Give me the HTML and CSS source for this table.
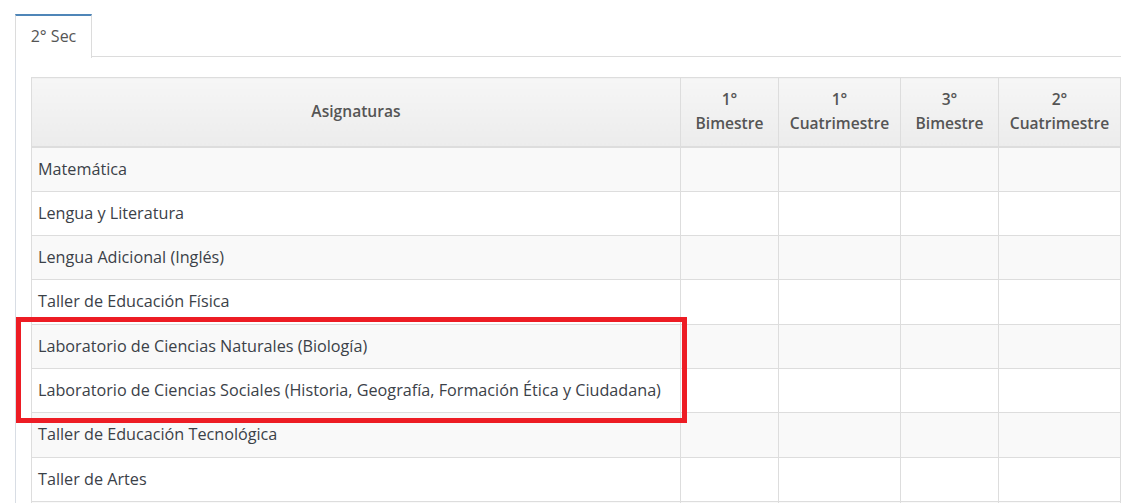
FILE: index.html
```html
<!DOCTYPE html>
<html lang="es">
<head>
<meta charset="utf-8">
<title>Asignaturas</title>
<link rel="stylesheet" href="styles.css">
</head>
<body>
<div class="page">
  <ul class="tabs">
    <li class="tab active">2° Sec</li>
  </ul>
  <div class="panel">
    <div class="table-wrap">
      <table class="grades">
        <colgroup>
          <col class="c-subject">
          <col class="c-bim">
          <col class="c-cuat">
          <col class="c-bim">
          <col class="c-cuat">
        </colgroup>
        <thead>
          <tr>
            <th>Asignaturas</th>
            <th>1°<br>Bimestre</th>
            <th>1°<br>Cuatrimestre</th>
            <th>3°<br>Bimestre</th>
            <th>2°<br>Cuatrimestre</th>
          </tr>
        </thead>
        <tbody>
          <tr><td>Matemática</td><td></td><td></td><td></td><td></td></tr>
          <tr><td>Lengua y Literatura</td><td></td><td></td><td></td><td></td></tr>
          <tr><td>Lengua Adicional (Inglés)</td><td></td><td></td><td></td><td></td></tr>
          <tr><td>Taller de Educación Física</td><td></td><td></td><td></td><td></td></tr>
          <tr><td>Laboratorio de Ciencias Naturales (Biología)</td><td></td><td></td><td></td><td></td></tr>
          <tr><td>Laboratorio de Ciencias Sociales (Historia, Geografía, Formación Ética y Ciudadana)</td><td></td><td></td><td></td><td></td></tr>
          <tr><td>Taller de Educación Tecnológica</td><td></td><td></td><td></td><td></td></tr>
          <tr><td>Taller de Artes</td><td></td><td></td><td></td><td></td></tr>
          <tr><td>&nbsp;</td><td></td><td></td><td></td><td></td></tr>
        </tbody>
      </table>
      <div class="highlight"></div>
    </div>
  </div>
</div>
</body>
</html>
```

FILE: styles.css
```css
html, body {
  margin: 0;
  padding: 0;
  background: #fff;
  overflow: hidden;
}

.page {
  padding-top: 14px;
  font-family: "Open Sans", "Liberation Sans", sans-serif;
  font-size: 16px;
  color: #3b4148;
}

.tabs {
  list-style: none;
  margin: 0 0 0 15px;
  padding: 0;
  display: flex;
  border-bottom: 1px solid #dcdcdc;
  height: 42px;
}

.tab {
  box-sizing: border-box;
  width: 77px;
  height: 44px;
  border-top: 2px solid #4f86b8;
  border-left: 1px solid #dcdcdc;
  border-right: 1px solid #dcdcdc;
  background: #fff;
  color: #555;
  font-size: 16px;
  padding-top: 9px;
  text-align: center;
  margin-bottom: -1px;
  position: relative;
  z-index: 1;
}

.panel {
  margin-left: 15px;
  border-left: 1px solid #d8dde4;
  padding: 20px 0 0 15px;
  height: 460px;
}

.table-wrap {
  position: relative;
}

.grades {
  border-collapse: collapse;
  table-layout: fixed;
  width: 1090px;
}

.c-subject { width: 649px; }
.c-bim { width: 98px; }
.c-cuat { width: 122px; }

.grades th,
.grades td {
  border: 1px solid #dddddd;
  padding: 10px 6px;
}

.grades th {
  background: linear-gradient(to bottom, #f6f6f6, #ececec);
  color: #555;
  font-size: 15.6px;
  font-weight: 600;
  text-align: center;
  vertical-align: middle;
  line-height: 23.8px;
  border-bottom: 2px solid #dddddd;
  padding: 10px 2px;
}

.grades td {
  font-size: 16.2px;
  line-height: 23.3px;
  text-align: left;
  white-space: nowrap;
}

.grades tbody tr:nth-child(odd) td {
  background: #f9f9f9;
}

.highlight {
  position: absolute;
  left: -15px;
  top: 240px;
  width: 671px;
  height: 106px;
  box-sizing: border-box;
  border: 5px solid #ed1c24;
  pointer-events: none;
}
```
